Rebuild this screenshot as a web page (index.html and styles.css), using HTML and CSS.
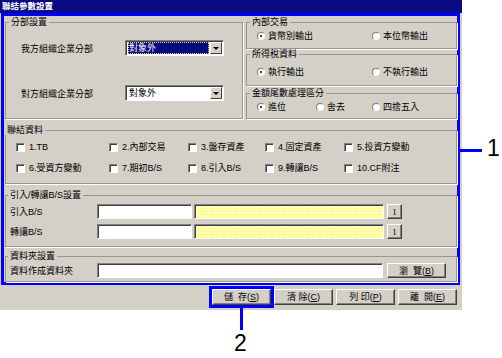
FILE: index.html
```html
<!DOCTYPE html>
<html lang="zh-Hant">
<head>
    <meta charset="UTF-8">
    <title>聯結參數設置</title>
    <link rel="stylesheet" href="styles.css">
</head>
<body>
<div class="page">
    <div class="window">
        <div class="titlebar">聯結參數設置</div>
        <div class="main">
            <div class="top">
                <fieldset class="grp branch">
                    <legend>分部設置</legend>
                    <div class="brow first">
                        <span class="blabel">我方組織企業分部</span>
                        <div class="select"><span class="val sel">對象外</span><span class="arrow"></span></div>
                    </div>
                    <div class="brow second">
                        <span class="blabel">對方組織企業分部</span>
                        <div class="select"><span class="val">對象外</span><span class="arrow"></span></div>
                    </div>
                </fieldset>
                <div class="rcol">
                    <fieldset class="grp g1">
                        <legend>內部交易</legend>
                        <div class="rrow">
                            <span class="opt w115"><span class="radio on"></span>貨幣別輸出</span>
                            <span class="opt"><span class="radio"></span>本位幣輸出</span>
                        </div>
                    </fieldset>
                    <fieldset class="grp g2">
                        <legend>所得稅資料</legend>
                        <div class="rrow">
                            <span class="opt w115"><span class="radio on"></span>執行輸出</span>
                            <span class="opt"><span class="radio"></span>不執行輸出</span>
                        </div>
                    </fieldset>
                    <fieldset class="grp g3">
                        <legend>金額尾數處理區分</legend>
                        <div class="rrow">
                            <span class="opt w59"><span class="radio on"></span>進位</span>
                            <span class="opt w56"><span class="radio"></span>舍去</span>
                            <span class="opt"><span class="radio"></span>四捨五入</span>
                        </div>
                    </fieldset>
                </div>
            </div>

            <fieldset class="grp link">
                <legend>聯結資料</legend>
                <div class="checks">
                    <span class="opt"><span class="check"></span>1.TB</span>
                    <span class="opt"><span class="check"></span>2.內部交易</span>
                    <span class="opt"><span class="check"></span>3.盤存資產</span>
                    <span class="opt"><span class="check"></span>4.固定資產</span>
                    <span class="opt"><span class="check"></span>5.投資方變動</span>
                    <span class="opt"><span class="check"></span>6.受資方變動</span>
                    <span class="opt"><span class="check"></span>7.期初B/S</span>
                    <span class="opt"><span class="check"></span>8.引入B/S</span>
                    <span class="opt"><span class="check"></span>9.轉讓B/S</span>
                    <span class="opt"><span class="check"></span>10.CF附注</span>
                </div>
            </fieldset>

            <fieldset class="grp bs">
                <legend>引入/轉讓B/S設置</legend>
                <div class="frow r1">
                    <span class="flabel">引入B/S</span>
                    <span class="field code"></span>
                    <span class="field yellow"></span>
                    <span class="btn small">1</span>
                </div>
                <div class="frow r2">
                    <span class="flabel">轉讓B/S</span>
                    <span class="field code"></span>
                    <span class="field yellow"></span>
                    <span class="btn small">1</span>
                </div>
            </fieldset>

            <fieldset class="grp folder">
                <legend>資料夾設置</legend>
                <div class="frow r3">
                    <span class="flabel">資料作成資料夾</span>
                    <span class="field path"></span>
                    <span class="btn browse">瀏&nbsp;&nbsp;覽(<u>B</u>)</span>
                </div>
            </fieldset>
        </div>

        <div class="buttons">
            <span class="btn act save">儲&nbsp;&nbsp;存(<u>S</u>)</span>
            <span class="btn act">清&nbsp;除(<u>C</u>)</span>
            <span class="btn act">列&nbsp;印(<u>P</u>)</span>
            <span class="btn act">離&nbsp;&nbsp;開(<u>E</u>)</span>
        </div>
    </div>

    <!-- callouts -->
    <div class="line1"></div>
    <div class="num n1">1</div>
    <div class="line2"></div>
    <div class="num n2">2</div>
</div>
</body>
</html>
```

FILE: styles.css
```css
body { margin: 0; background: #fff; font-family: "Liberation Sans", "Noto Sans CJK TC", sans-serif; font-size: 9px; color: #000; }
.page { position: relative; width: 502px; height: 358px; }

.window { width: 462px; height: 310px; background: #d4d0c8; display: flex; flex-direction: column; }
.titlebar { height: 13px; line-height: 13px; background: #0a0a82; color: #fff; font-weight: bold; font-size: 8.5px; padding-left: 2px; }

.main { margin-left: 1px; width: 453px; height: 266px; border: 3px solid #0000ff; display: flex; flex-direction: column; }

.grp { margin: 0; padding: 0; border: 1px solid #9a978f; box-shadow: 1px 1px 0 #fff; box-sizing: border-box; min-width: 0; }
.grp legend { padding: 0 2px; margin-left: 3px; line-height: 10px; font-size: 9px; }
.link legend { margin-left: -1px; }
.bs legend, .folder legend { margin-left: 2px; }

.top { display: flex; gap: 3px; padding: 1px 0 0 1px; }
.branch { width: 238px; height: 102px; }
.brow { display: flex; align-items: center; height: 14px; padding-left: 15px; }
.brow.first { margin-top: 14px; }
.brow.second { margin-top: 31px; }
.blabel { width: 104px; }

.select { display: flex; width: 95px; height: 12px; background: #fff; border: 1px solid; border-color: #808080 #fff #fff #808080; box-shadow: inset 1px 1px 0 #404040; padding: 1px; }
.select .val { flex: 1; line-height: 12px; padding-left: 1px; margin-left: 1px; }
.select .val.sel { background: #0a0a82; color: #fff; outline: 1px dotted #e0d070; outline-offset: -1px; margin-right: 1px; }
.arrow { width: 10px; height: 10px; background: #d4d0c8; border: 1px solid; border-color: #fff #404040 #404040 #fff; position: relative; }
.arrow::after { content: ""; position: absolute; left: 2px; top: 4px; border-left: 3px solid transparent; border-right: 3px solid transparent; border-top: 3px solid #000; }

.rcol { display: flex; flex-direction: column; width: 211px; }
.g1 { height: 32px; }
.g2 { height: 37px; }
.g3 { height: 31px; margin-top: 2px; }
.rrow { display: flex; align-items: center; height: 10px; padding-left: 10px; }
.g1 .rrow { margin-top: 4px; }
.g2 .rrow { margin-top: 8px; }
.g3 .rrow { margin-top: 4px; }

.opt { display: inline-flex; align-items: center; gap: 3px; line-height: 10px; white-space: nowrap; }
.w115 { width: 115px; }
.w59 { width: 59px; }
.w56 { width: 56px; }

.radio { width: 6px; height: 6px; border-radius: 50%; background: #fff; border: 1px solid; border-color: #808080 #fff #fff #808080; box-shadow: 0 0 0 0.5px #c8c4bc; position: relative; }
.radio.on::after { content: ""; position: absolute; left: 2px; top: 2px; width: 2px; height: 2px; border-radius: 50%; background: #000; }

.check { width: 7px; height: 7px; background: #fff; border: 1px solid; border-color: #808080 #fff #fff #808080; box-shadow: inset 1px 1px 0 #404040; margin-right: 1px; }

.link { margin: 6px 0 0 1px; width: 452px; height: 59px; }
.checks { display: grid; grid-template-columns: 93px 79px 77px 79px auto; row-gap: 11px; margin-top: 7px; padding-left: 10px; }

.bs { margin: 6px 0 0 1px; width: 452px; height: 57px; }
.folder { margin: 4px 0 0 1px; width: 452px; height: 31px; }
.frow { display: flex; align-items: center; height: 15px; padding-left: 4px; }
.r1 { margin-top: 4px; }
.r2 { margin-top: 5px; }
.r3 { margin-top: 2px; }
.flabel { width: 87px; }

.field { height: 15px; box-sizing: border-box; background: #fff; border: 1px solid; border-color: #808080 #fff #fff #808080; box-shadow: inset 1px 1px 0 #404040; }
.field.code { width: 95px; }
.field.yellow { width: 190px; margin-left: 2px; background-color: #ffffd0; background-image: repeating-linear-gradient(90deg, #ffff88 0 1px, transparent 1px 3px), repeating-linear-gradient(0deg, #ffff88 0 1px, transparent 1px 3px); }
.field.path { width: 286px; }

.btn { display: inline-flex; align-items: center; justify-content: center; box-sizing: border-box; background: #d4d0c8; border: 1px solid; border-color: #fff #404040 #404040 #fff; box-shadow: inset -1px -1px 0 #808080; white-space: nowrap; line-height: 10px; }
.btn.small { width: 15px; height: 15px; margin-left: 3px; font-family: "Liberation Serif", serif; font-size: 9px; }
.btn.browse { width: 59px; height: 15px; margin-left: 4px; }

.buttons { display: flex; justify-content: flex-end; gap: 3px; padding-right: 5px; margin-top: 4px; }
.btn.act { width: 59px; height: 16px; }
.btn.save { outline: 3px solid #0000ff; outline-offset: 0; }

.line1 { position: absolute; left: 460px; top: 149px; width: 22px; height: 3px; background: #0000ff; }
.line2 { position: absolute; left: 240px; top: 306px; width: 3px; height: 24px; background: #0000ff; }
.num { position: absolute; font-family: "Liberation Sans", Arial, sans-serif; font-size: 23px; line-height: 23px; }
.n1 { left: 487px; top: 137px; }
.n2 { left: 234px; top: 332px; }
```
